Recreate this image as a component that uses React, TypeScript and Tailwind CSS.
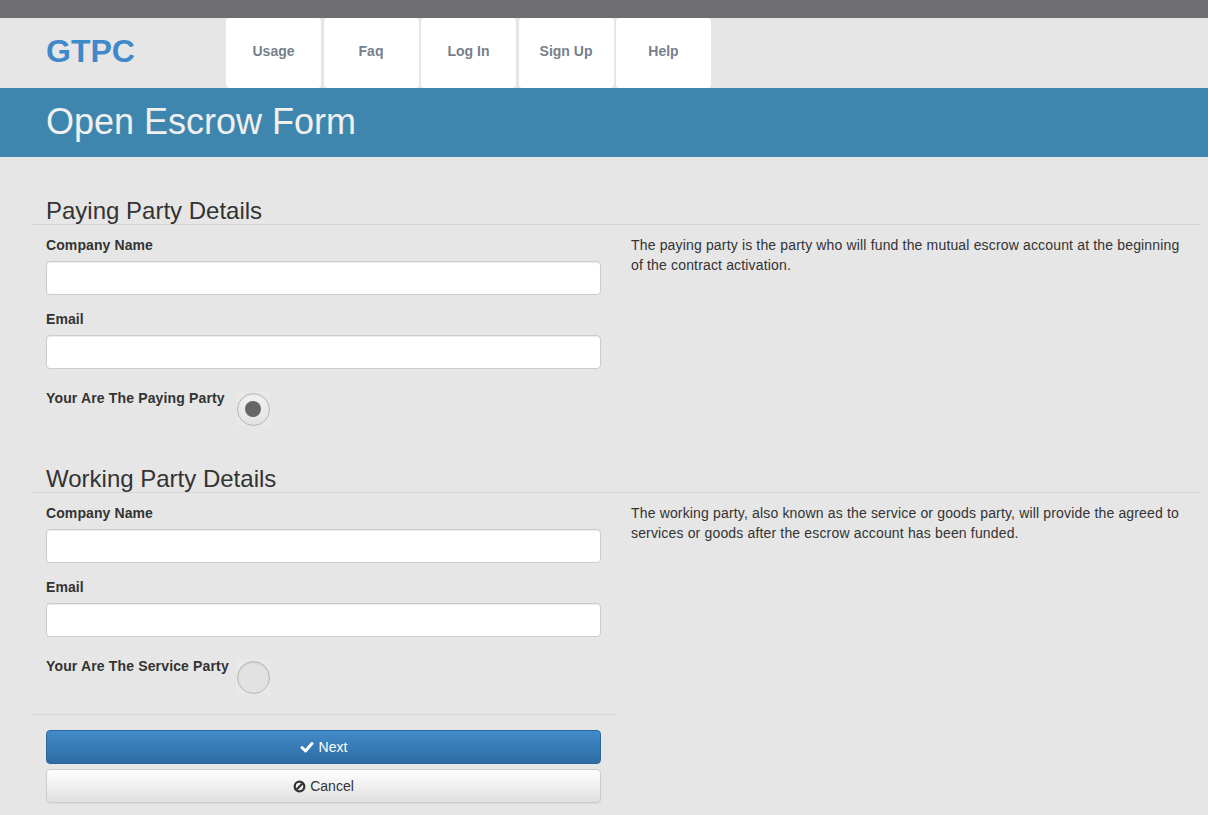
import { useState } from 'react';

const navItems = ['Usage', 'Faq', 'Log In', 'Sign Up', 'Help'];

type Field = { label: string };

const fields: Field[] = [{ label: 'Company Name' }, { label: 'Email' }];

function Radio({ checked, onClick }: { checked: boolean; onClick: () => void }) {
  return (
    <button
      type="button"
      onClick={onClick}
      className="mt-[4px] w-[34px] h-[34px] bg-[#e9e9e9] flex items-center justify-center"
    >
      <span
        className={`w-[33px] h-[33px] rounded-full border border-[#b5b5b5] flex items-center justify-center shadow-[inset_0_1px_2px_rgba(0,0,0,0.08)] ${
          checked ? 'bg-gradient-to-b from-[#f3f3f3] to-[#e2e2e2]' : 'bg-[#e2e2e2]'
        }`}
      >
        {checked && <span className="w-[16px] h-[16px] rounded-full bg-[#666666]" />}
      </span>
    </button>
  );
}

function SectionHeading({ title, mt }: { title: string; mt: string }) {
  return (
    <div className={`${mt} border-b border-[#d6d6d6]`}>
      <h3 className="pl-[15px] text-[24px] leading-[26px] text-[#333] font-normal">{title}</h3>
    </div>
  );
}

function Fields({ radioLabel, checked, onToggle }: { radioLabel: string; checked: boolean; onToggle: () => void }) {
  return (
    <div className="pt-[10px]">
      {fields.map((f, i) => (
        <div key={f.label} className={i === 0 ? '' : 'mt-[14px]'}>
          <label className="block text-[14px] leading-[20px] font-bold text-[#333] mb-[6px] tracking-[0.1px]">
            {f.label}
          </label>
          <input
            type="text"
            className="block w-full h-[34px] bg-white border border-[#cccccc] rounded-[4px] shadow-[inset_0_1px_1px_rgba(0,0,0,0.075)] px-3 text-[14px] outline-none"
          />
        </div>
      ))}
      <div className="mt-[19px] flex items-start">
        <span className="w-[190px] text-[14px] leading-[20px] font-bold text-[#333] tracking-[0.15px]">
          {radioLabel}
        </span>
        <Radio checked={checked} onClick={onToggle} />
      </div>
    </div>
  );
}

export default function App() {
  const [payer, setPayer] = useState(true);

  return (
    <div className="min-h-[815px] bg-[#e6e6e6] font-['Liberation_Sans',Arial,sans-serif] text-[#333]">
      <div className="h-[18px] bg-[#6e6d72]" />

      <header className="h-[70px] flex">
        <div className="w-[226px] pl-[46px] pb-[4px] flex items-center">
          <span className="text-[32px] font-bold text-[#3f88c9] leading-none">GTPC</span>
        </div>
        <nav className="flex gap-[2.5px]">
          {navItems.map((item) => (
            <a
              key={item}
              href="#"
              className="w-[95px] h-[70px] pb-[4px] bg-white rounded-[4px] flex items-center justify-center text-[14px] font-bold text-[#77808a]"
            >
              {item}
            </a>
          ))}
        </nav>
      </header>

      <div className="h-[69px] bg-[#3e86ae] flex items-center pl-[46px]">
        <h1 className="text-[36px] font-light text-[#f0f0f0] leading-none pb-[1px]">Open Escrow Form</h1>
      </div>

      <main className="ml-[31px] w-[1170px] pb-[12px]">
        <SectionHeading title="Paying Party Details" mt="mt-[41px]" />
        <div className="grid grid-cols-2">
          <div className="px-[15px]">
            <Fields radioLabel="Your Are The Paying Party" checked={payer} onToggle={() => setPayer(true)} />
          </div>
          <p className="px-[15px] pt-[10px] text-[14px] leading-[20px] tracking-[0.16px]">
            The paying party is the party who will fund the mutual escrow account at the beginning of the contract
            activation.
          </p>
        </div>

        <SectionHeading title="Working Party Details" mt="mt-[40px]" />
        <div className="grid grid-cols-2">
          <div>
            <div className="px-[15px]">
              <Fields radioLabel="Your Are The Service Party" checked={!payer} onToggle={() => setPayer(false)} />
            </div>
            <div className="mt-[20px] border-t border-[#d6d6d6]" />
            <div className="px-[15px] pt-[15px] flex flex-col gap-[5px]">
              <button
                type="button"
                className="h-[34px] w-full rounded-[4px] border border-[#2b669a] bg-gradient-to-b from-[#428bca] to-[#2d6ca2] text-white text-[14px] flex items-center justify-center gap-[5px]"
              >
                <svg width="14" height="12" viewBox="0 0 14 12" className="mt-[-1px]">
                  <polyline
                    points="2,6.5 5.5,10 12,2.5"
                    fill="none"
                    stroke="white"
                    strokeWidth="3"
                    strokeLinecap="round"
                    strokeLinejoin="round"
                  />
                </svg>
                Next
              </button>
              <button
                type="button"
                className="h-[34px] w-full rounded-[4px] border border-[#cccccc] bg-gradient-to-b from-white to-[#e0e0e0] text-[#333] text-[14px] flex items-center justify-center gap-[4px] shadow-[0_1px_1px_rgba(0,0,0,0.05)]"
              >
                <svg width="13" height="13" viewBox="0 0 14 14">
                  <circle cx="7" cy="7" r="5.2" fill="none" stroke="#333" strokeWidth="2.4" />
                  <line x1="3.5" y1="10.5" x2="10.5" y2="3.5" stroke="#333" strokeWidth="2.4" />
                </svg>
                Cancel
              </button>
            </div>
          </div>
          <p className="px-[15px] pt-[10px] text-[14px] leading-[20px] tracking-[0.16px]">
            The working party, also known as the service or goods party, will provide the agreed to services or goods
            after the escrow account has been funded.
          </p>
        </div>
      </main>
    </div>
  );
}
